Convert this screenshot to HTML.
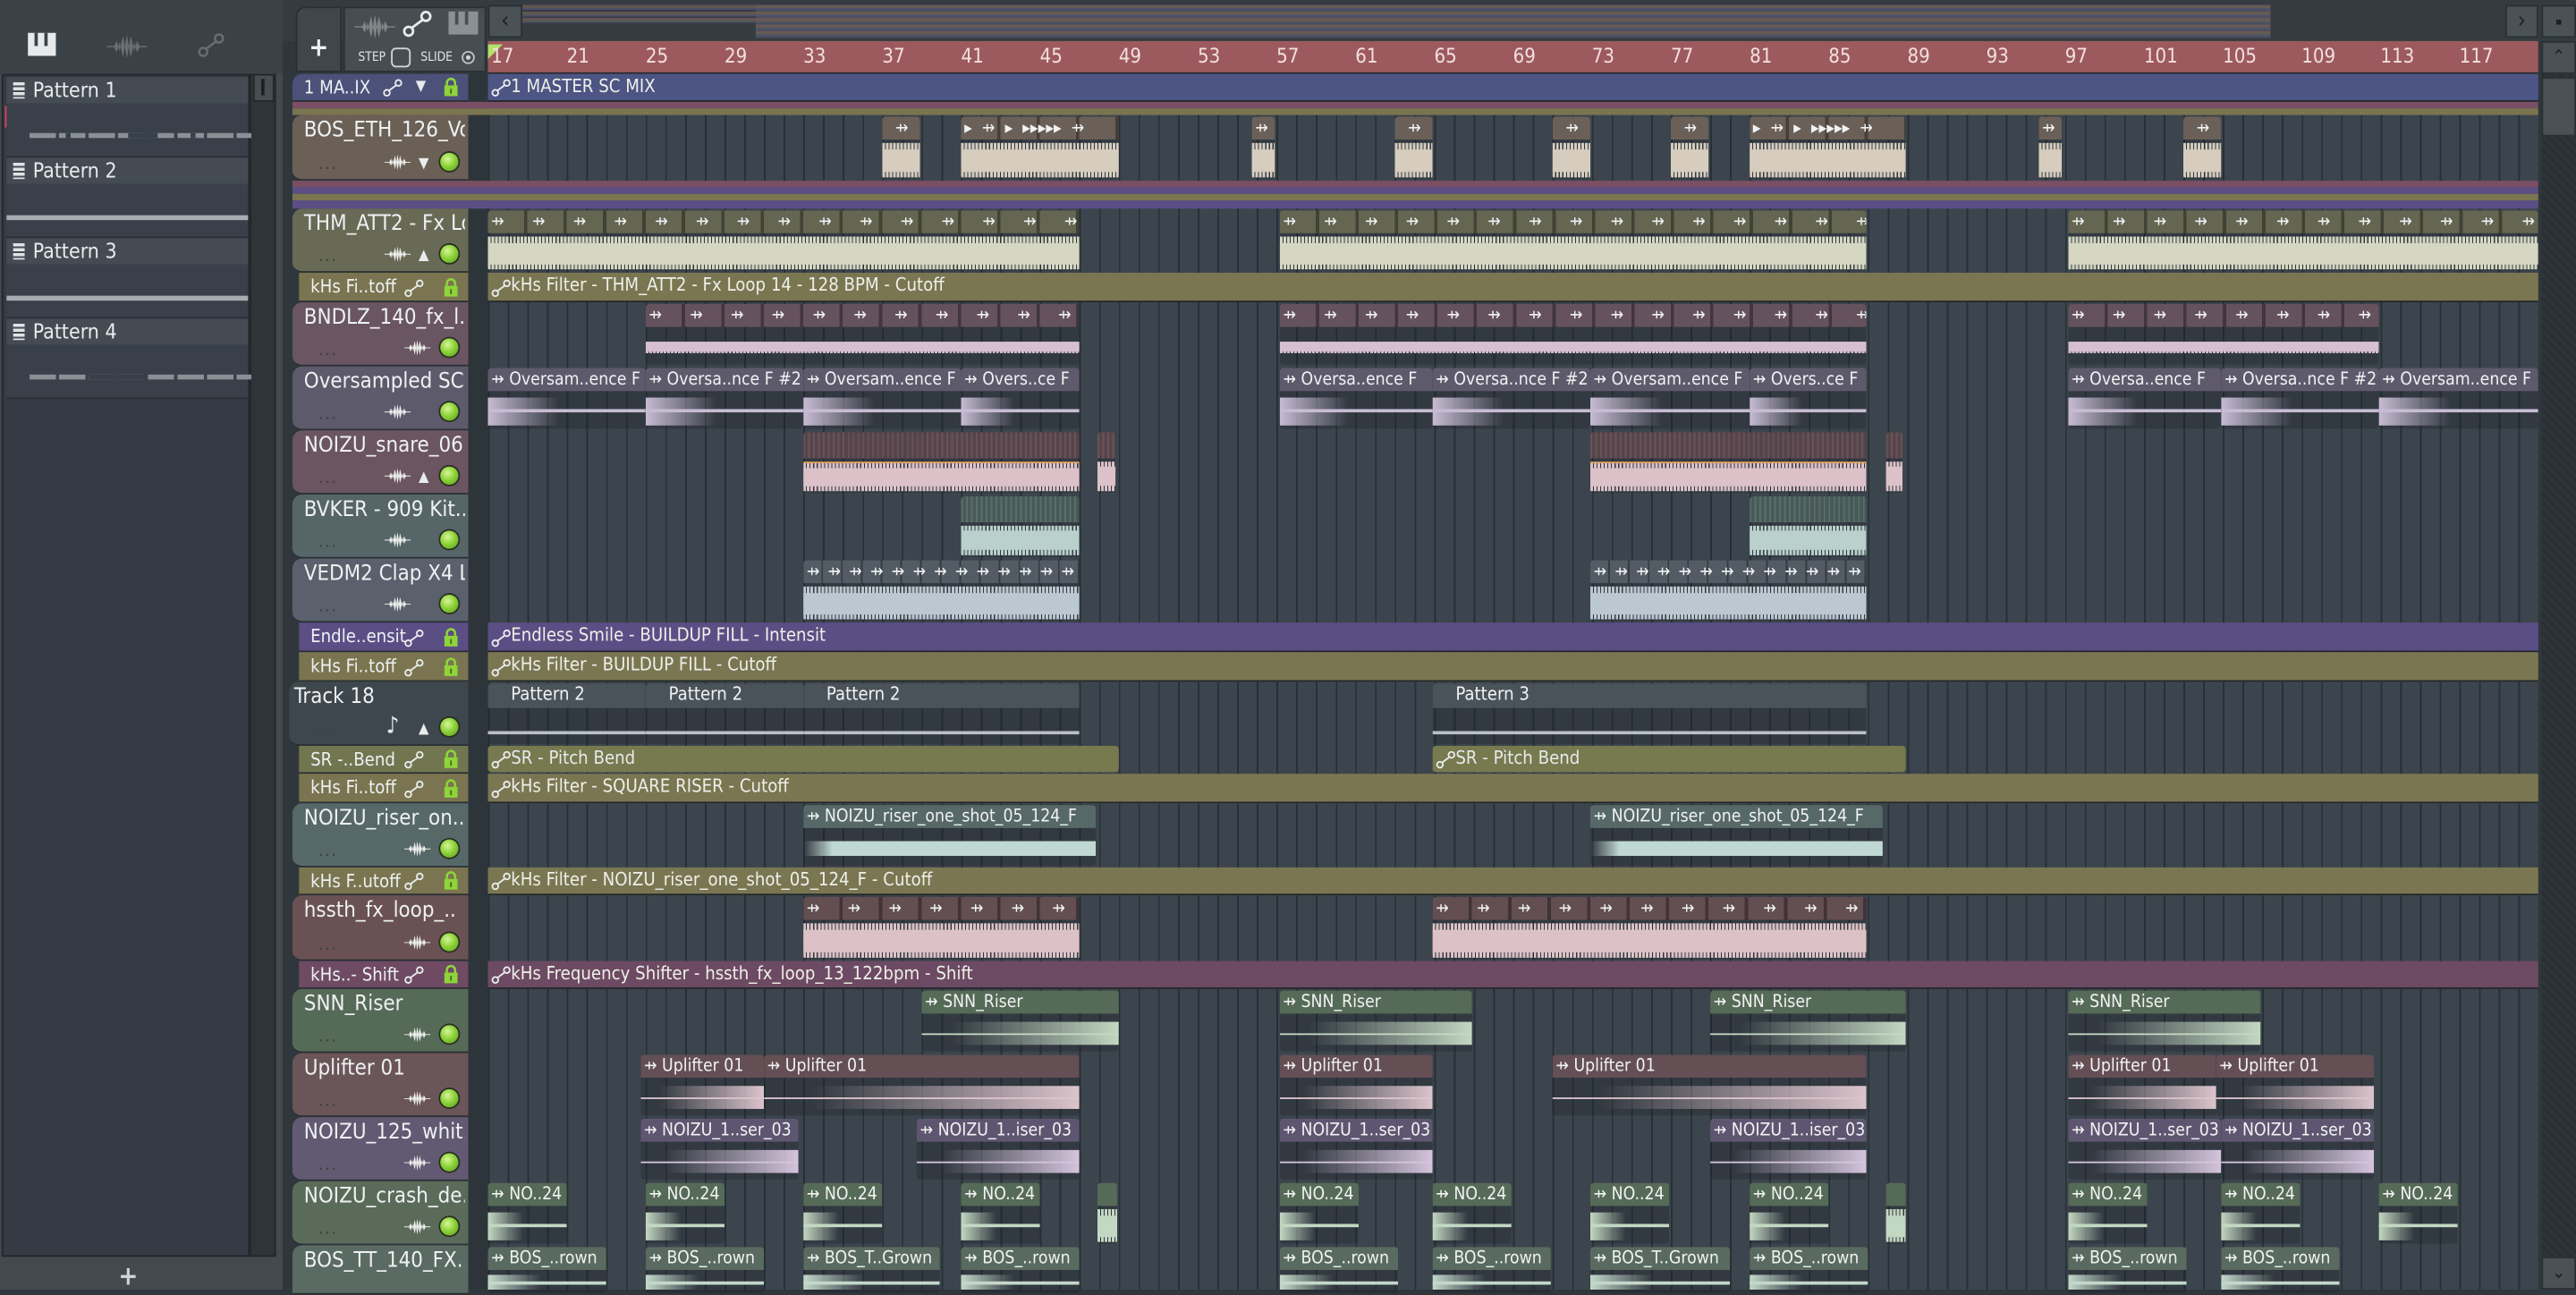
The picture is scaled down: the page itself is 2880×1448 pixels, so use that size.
<!DOCTYPE html>
<html><head><meta charset="utf-8">
<style>
*{box-sizing:border-box;margin:0;padding:0}
html,body{width:2880px;height:1442px;overflow:hidden;background:#30373c}
#s{position:absolute;left:0;top:0;width:1568px;height:785px;transform:scale(1.83674,1.83694);transform-origin:0 0;font-family:"DejaVu Sans Condensed","Liberation Sans Narrow","Liberation Sans",sans-serif;color:#e6eaec;background:#30373c}
.a{position:absolute}
.grid{position:absolute;left:297px;top:45px;width:1248px;height:740px;background:#3c454d;background-image:repeating-linear-gradient(90deg,#283036 0 1px,transparent 1px 12px)}
.row{position:absolute;left:0;width:1545px}
.c{position:absolute;top:1px;bottom:1px;background:rgba(25,30,35,.28);border-radius:2px;overflow:hidden}
.ch{height:14px;line-height:14px;font-size:10.5px;padding-left:2px;white-space:nowrap;overflow:hidden;background:var(--hc);color:#f0f2f3;border-radius:2px 2px 0 0}
.seg{background-image:repeating-linear-gradient(90deg,transparent 0 22px,rgba(0,0,0,.35) 22px 24px)}
.cw{position:absolute;left:0;right:0;top:16px;bottom:1px;background:repeating-linear-gradient(90deg,var(--wc) 0 1.6px,rgba(0,0,0,0) 1.6px 2.2px) 0 50%/100% 100% no-repeat,linear-gradient(var(--wc),var(--wc)) 0 50%/100% 65% no-repeat}
.cw.tl{background:linear-gradient(var(--wc),var(--wc)) 0 50%/100% 2px no-repeat,linear-gradient(90deg,var(--wc),rgba(0,0,0,0) 45%) 0 50%/100% 85% no-repeat}
.cw.up{background:linear-gradient(90deg,rgba(0,0,0,0) 15%,var(--wc)) 0 50%/100% 70% no-repeat,linear-gradient(var(--wc),var(--wc)) 0 50%/100% 1px no-repeat}
.cw.ov{background:linear-gradient(var(--wc),var(--wc)) 0 50%/100% 3px no-repeat}
.au{position:absolute;left:297px;width:1248px;top:0;height:100%;font-size:11px;line-height:16px;padding-left:14px;white-space:nowrap;color:#eef0e8;border-bottom:1px solid #22282c}
.hd{position:absolute;left:178px;width:107px;border-radius:6px 0 0 6px;overflow:hidden;border-bottom:1px solid #2a3035}
.hn{position:absolute;left:7px;top:2px;width:98px;overflow:hidden;font-size:13px;white-space:nowrap;color:#eef1f2}
.hs{position:absolute;left:7px;top:0;font-size:11px;line-height:17px;white-space:nowrap;color:#eef1f2}
.dots{position:absolute;left:16px;bottom:3px;font-size:10px;color:#3a3f3a;letter-spacing:1px}
.led{position:absolute;right:6px;bottom:5px;width:11px;height:11px;border-radius:50%;background:radial-gradient(circle at 40% 35%,#d6f59a,#8ed43a 45%,#5a9a20);box-shadow:0 0 0 1px #2a3020}
.tri{position:absolute;right:24px;bottom:4px;font-size:9px;color:#e8ecec}
.wv{position:absolute;right:34px;bottom:4px;width:17px;height:13px}
.lock{position:absolute;right:6px;top:3px;width:9px;height:12px}
.cv{position:absolute;width:12px;height:11px}
.pt{position:absolute;left:4px;width:147px}
.ph{height:16px;background:#444b52;font-size:12.5px;line-height:16px;padding-left:16px;position:relative;color:#e8ecee}
.ph:before{content:"";position:absolute;left:4px;top:3px;width:7px;height:10px;background:repeating-linear-gradient(#e0e4e6 0 2px,#444b52 2px 3px)}
.pb{height:33px;background:#39404a;position:relative;border-bottom:1px solid #2a3036}
.rn{position:absolute;top:27px;font-size:12px;color:#f3dfdf}
</style></head><body><div id="s">

<svg width="0" height="0" style="position:absolute"><defs>
<symbol id="wave" viewBox="0 0 17 13"><path d="M0 6.5h3l1-2 1 4 1.5-6 1.5 9 1.5-9 1.5 6 1-4 1 2h3v.5h-3l-1 2-1-4-1.5 6-1.5-9-1.5 9-1.5-6-1 4-1-2h-3z" fill="#eef0ee"/></symbol>
<symbol id="crv" viewBox="0 0 12 11"><circle cx="2.5" cy="8.5" r="1.8" fill="none" stroke="#e8ecec" stroke-width="1"/><circle cx="9.5" cy="2.5" r="1.8" fill="none" stroke="#e8ecec" stroke-width="1"/><path d="M4 7L8 4" stroke="#e8ecec" stroke-width="1"/></symbol>
<symbol id="lk" viewBox="0 0 9 12"><path d="M2 5V3.5a2.5 2.5 0 0 1 5 0V5" fill="none" stroke="#8ed43a" stroke-width="1.4"/><rect x="0.5" y="5" width="8" height="6.5" fill="#8ed43a"/><rect x="4" y="7" width="1" height="3" fill="#4a6a20"/></symbol>
</defs></svg>

<!-- left panel -->
<div class="a" style="left:0;top:0;width:172px;height:785px;background:#434a4e"></div>
<div class="a" style="left:0;top:0;width:172px;height:45px;background:#3b4247"></div>
<div class="a" style="left:17px;top:20px;width:17px;height:14px;background:#e6eaec"></div>
<div class="a" style="left:21px;top:20px;width:2px;height:8px;background:#3b4247"></div>
<div class="a" style="left:27px;top:20px;width:2px;height:8px;background:#3b4247"></div>
<svg class="a" style="left:62px;top:18px" width="32" height="20" viewBox="0 0 17 13"><use href="#wave" opacity=".25"/></svg>
<svg class="a" style="left:120px;top:20px;opacity:.25" width="17" height="15" viewBox="0 0 12 11"><use href="#crv"/></svg>
<div class="a" style="left:1px;top:45px;width:151px;height:720px;background:#353b45;border:1px solid #22272b"></div>
<div class="a" style="left:152px;top:45px;width:16px;height:720px;background:#2f3438;border:1px solid #22272b"></div>
<div class="a" style="left:154px;top:45px;width:13px;height:17px;background:#474e52;border:1px solid #22272b"></div>
<div class="a" style="left:159px;top:48px;width:2px;height:10px;background:#1c2024"></div>
<div class="a" style="left:0;top:766px;width:172px;height:19px;background:#434a4e"></div>
<div class="a" style="left:72px;top:767px;font-size:16px;font-weight:bold;color:#d0d4d6">+</div>
<div class="a" style="left:3px;top:64px;width:0;height:0;border-left:9px solid #d8405a;border-top:7px solid transparent;border-bottom:7px solid transparent"></div>

<div class="pt" style="top:47px"><div class="ph">Pattern 1</div><div class="pb"><div class="a" style="left:14px;top:18px;width:135px;height:3px;background:repeating-linear-gradient(90deg,#8a9196 0 16px,transparent 16px 18px)"></div><div class="a" style="left:36px;top:18px;width:3px;height:3px;background:#39404a"></div><div class="a" style="left:74px;top:18px;width:18px;height:3px;background:#39404a"></div><div class="a" style="left:112px;top:18px;width:3px;height:3px;background:#39404a"></div></div></div>
<div class="pt" style="top:96px"><div class="ph">Pattern 2</div><div class="pb"><div class="a" style="left:0;top:19px;width:147px;height:3px;background:#a6adb2"></div></div></div>
<div class="pt" style="top:145px"><div class="ph">Pattern 3</div><div class="pb"><div class="a" style="left:0;top:19px;width:147px;height:3px;background:#a6adb2"></div></div></div>
<div class="pt" style="top:194px"><div class="ph">Pattern 4</div><div class="pb"><div class="a" style="left:14px;top:18px;width:135px;height:3px;background:repeating-linear-gradient(90deg,#8a9196 0 16px,transparent 16px 18px)"></div><div class="a" style="left:50px;top:18px;width:36px;height:3px;background:#39404a"></div></div></div>

<!-- top toolbar -->
<div class="a" style="left:172px;top:0;width:1396px;height:25px;background:#353c41"></div>
<div class="a" style="left:180px;top:4px;width:28px;height:40px;background:#3f474b;border-radius:6px 0 0 0;border:1px solid #2a3034"></div>
<div class="a" style="left:188px;top:19px;font-size:16px;font-weight:bold;color:#f0f2f3">+</div>
<div class="a" style="left:209px;top:4px;width:87px;height:40px;background:#474e52;border:1px solid #2a3034"></div>
<svg class="a" style="left:214px;top:6px;opacity:.35" width="30" height="20" viewBox="0 0 17 13"><use href="#wave"/></svg>
<svg class="a" style="left:245px;top:6px" width="18" height="17" viewBox="0 0 12 11"><use href="#crv"/></svg>
<div class="a" style="left:273px;top:7px;width:18px;height:14px;background:#8a9196"></div>
<div class="a" style="left:277px;top:7px;width:2px;height:8px;background:#474e52"></div>
<div class="a" style="left:283px;top:7px;width:2px;height:8px;background:#474e52"></div>
<div class="a" style="left:218px;top:30px;font-size:7.5px;color:#e0e4e6">STEP</div>
<div class="a" style="left:238px;top:29px;width:12px;height:12px;border:1px solid #d0d4d6;border-radius:3px"></div>
<div class="a" style="left:256px;top:30px;font-size:7.5px;color:#e0e4e6">SLIDE</div>
<div class="a" style="left:281px;top:31px;width:8px;height:8px;border:1px solid #c0c4c6;border-radius:50%;background:radial-gradient(#d0d4d6 30%,transparent 35%)"></div>
<div class="a" style="left:297px;top:3px;width:21px;height:20px;background:#4a5256;border:1px solid #2a3034;font-size:14px;color:#1c2024;text-align:center;line-height:18px">&lsaquo;</div>
<div class="a" style="left:460px;top:3px;width:922px;height:20px;background:#4e575c;background-image:repeating-linear-gradient(#7a5a6a 0 1px,#6a6a4a 1px 2px,#5a5480 2px 3px,transparent 3px 4px);opacity:.8"></div>
<div class="a" style="left:318px;top:3px;width:142px;height:11px;background-image:repeating-linear-gradient(#7a5a6a 0 1px,#6a6a4a 1px 2px,#5a5480 2px 3px,transparent 3px 4px);opacity:.7"></div>
<div class="a" style="left:1525px;top:3px;width:20px;height:20px;background:#4a5256;border:1px solid #2a3034;font-size:14px;color:#1c2024;text-align:center;line-height:18px">&rsaquo;</div>
<div class="a" style="left:1547px;top:3px;width:21px;height:20px;background:#4a5256;border:1px solid #2a3034"></div>
<div class="a" style="left:1556px;top:12px;width:3px;height:3px;background:#1c2024"></div>

<!-- ruler -->
<div class="a" style="left:297px;top:25px;width:1248px;height:20px;background:#9d5a5e;border-bottom:1px solid #2a2a2e"></div>
<div class="a" style="left:297px;top:27px;width:0;height:0;border-top:9px solid #b6e06a;border-right:9px solid transparent"></div>
<div class="rn" style="left:299px">17</div><div class="rn" style="left:345px">21</div><div class="rn" style="left:393px">25</div><div class="rn" style="left:441px">29</div><div class="rn" style="left:489px">33</div><div class="rn" style="left:537px">37</div><div class="rn" style="left:585px">41</div><div class="rn" style="left:633px">45</div><div class="rn" style="left:681px">49</div><div class="rn" style="left:729px">53</div><div class="rn" style="left:777px">57</div><div class="rn" style="left:825px">61</div><div class="rn" style="left:873px">65</div><div class="rn" style="left:921px">69</div><div class="rn" style="left:969px">73</div><div class="rn" style="left:1017px">77</div><div class="rn" style="left:1065px">81</div><div class="rn" style="left:1113px">85</div><div class="rn" style="left:1161px">89</div><div class="rn" style="left:1209px">93</div><div class="rn" style="left:1257px">97</div><div class="rn" style="left:1305px">101</div><div class="rn" style="left:1353px">105</div><div class="rn" style="left:1401px">109</div><div class="rn" style="left:1449px">113</div><div class="rn" style="left:1497px">117</div>

<!-- right scrollbar -->
<div class="a" style="left:1547px;top:25px;width:21px;height:760px;background:#2c3236;background-image:repeating-linear-gradient(45deg,#2e3438 0 2px,#292f33 2px 4px)"></div>
<div class="a" style="left:1547px;top:25px;width:21px;height:20px;background:#4a5256;border:1px solid #2a3034;font-size:11px;text-align:center;line-height:18px;color:#1c2024">&#8963;</div>
<div class="a" style="left:1547px;top:47px;width:21px;height:36px;background:#4a5256;border:1px solid #2a3034"></div>
<div class="a" style="left:1547px;top:765px;width:21px;height:20px;background:#4a5256;border:1px solid #2a3034;font-size:11px;text-align:center;line-height:18px;color:#1c2024">&#8964;</div>

<div class="a" style="left:285px;top:45px;width:12px;height:740px;background:#2e353a"></div>
<div class="grid"></div>

<!-- 1 MASTER -->
<div class="row" style="top:45px;height:17px">
<div class="hd" style="height:17px;background:#4c5179;border-radius:6px 0 0 0"><div class="hs">1 MA..IX</div><svg class="cv" style="left:55px;top:3px"><use href="#crv"/></svg><div class="a" style="left:75px;top:3px;font-size:9px">&#9660;</div><svg class="lock" style="top:2px"><use href="#lk"/></svg></div>
<div class="au" style="background:#4c5584">1 MASTER SC MIX</div>
</div>
<div class="a" style="left:178px;top:62px;width:1367px;height:4px;background:#7a4e63"></div>
<div class="a" style="left:178px;top:66px;width:1367px;height:4px;background:#7a7550"></div>

<!-- BOS_ETH -->
<div class="row" style="top:70px;height:40px;--hc:#6a6058;--wc:#d6cdbf">
<div class="hd" style="height:40px;background:#6b6056"><div class="hn">BOS_ETH_126_Vo..</div><div class="dots">...</div><svg class="wv"><use href="#wave"/></svg><div class="tri">&#9660;</div><div class="led"></div></div>
<div class="c" style="left:537px;width:23px"><div class="ch">&nbsp;&nbsp;&#8696;</div><div class="cw"></div></div>
<div class="c" style="left:585px;width:96px"><div class="ch seg" style="word-spacing:3px">&#9656; &#8696; &#9656; &#9656;&#9656;&#9656;&#9656;&#9656; &#8696;</div><div class="cw"></div></div>
<div class="c" style="left:762px;width:14px"><div class="ch">&#8696;</div><div class="cw"></div></div>
<div class="c" style="left:849px;width:23px"><div class="ch">&nbsp;&nbsp;&#8696;</div><div class="cw"></div></div>
<div class="c" style="left:945px;width:23px"><div class="ch">&nbsp;&nbsp;&#8696;</div><div class="cw"></div></div>
<div class="c" style="left:1017px;width:23px"><div class="ch">&nbsp;&nbsp;&#8696;</div><div class="cw"></div></div>
<div class="c" style="left:1065px;width:95px"><div class="ch seg" style="word-spacing:3px">&#9656; &#8696; &#9656; &#9656;&#9656;&#9656;&#9656;&#9656; &#8696;</div><div class="cw"></div></div>
<div class="c" style="left:1241px;width:14px"><div class="ch">&#8696;</div><div class="cw"></div></div>
<div class="c" style="left:1329px;width:23px"><div class="ch">&nbsp;&nbsp;&#8696;</div><div class="cw"></div></div>
</div>
<div class="a" style="left:178px;top:110px;width:1367px;height:4px;background:#7a4e63"></div>
<div class="a" style="left:178px;top:114px;width:1367px;height:4px;background:#5b4e85"></div>
<div class="a" style="left:178px;top:118px;width:1367px;height:4px;background:#7a7550"></div>
<div class="a" style="left:178px;top:122px;width:1367px;height:5px;background:#5b4e85"></div>

<!-- THM -->
<div class="row" style="top:127px;height:39px;--hc:#646652;--wc:#d5d7c2">
<div class="hd" style="height:39px;background:#696a56"><div class="hn">THM_ATT2 - Fx Lo..</div><div class="dots">...</div><svg class="wv"><use href="#wave"/></svg><div class="tri">&#9650;</div><div class="led"></div></div>
<div class="c" style="left:297px;width:360px"><div class="ch seg" style="word-spacing:14px">&#8696; &#8696; &#8696; &#8696; &#8696; &#8696; &#8696; &#8696; &#8696; &#8696; &#8696; &#8696; &#8696; &#8696; &#8696;</div><div class="cw"></div></div>
<div class="c" style="left:779px;width:357px"><div class="ch seg" style="word-spacing:14px">&#8696; &#8696; &#8696; &#8696; &#8696; &#8696; &#8696; &#8696; &#8696; &#8696; &#8696; &#8696; &#8696; &#8696; &#8696;</div><div class="cw"></div></div>
<div class="c" style="left:1259px;width:286px"><div class="ch seg" style="word-spacing:14px">&#8696; &#8696; &#8696; &#8696; &#8696; &#8696; &#8696; &#8696; &#8696; &#8696; &#8696; &#8696;</div><div class="cw"></div></div>
</div>

<div class="row" style="top:166px;height:18px">
<div class="hd" style="height:18px;background:#7a7550;border-radius:0;left:182px;width:103px"><div class="hs">kHs Fi..toff</div><svg class="cv" style="left:64px;top:4px"><use href="#crv"/></svg><svg class="lock"><use href="#lk"/></svg></div>
<div class="au" style="background:#7b7652">kHs Filter - THM_ATT2 - Fx Loop 14 - 128 BPM - Cutoff</div>
</div>

<!-- BNDLZ -->
<div class="row" style="top:184px;height:39px;--hc:#66525e;--wc:#d6bfd0">
<div class="hd" style="height:39px;background:#6a5562"><div class="hn">BNDLZ_140_fx_l..</div><div class="dots">...</div><svg class="wv" style="right:22px"><use href="#wave"/></svg><div class="led"></div></div>
<div class="c" style="left:393px;width:264px"><div class="ch seg" style="word-spacing:14px">&#8696; &#8696; &#8696; &#8696; &#8696; &#8696; &#8696; &#8696; &#8696; &#8696; &#8696;</div><div class="cw" style="background-size:100% 35%,100% 30%"></div></div>
<div class="c" style="left:779px;width:357px"><div class="ch seg" style="word-spacing:14px">&#8696; &#8696; &#8696; &#8696; &#8696; &#8696; &#8696; &#8696; &#8696; &#8696; &#8696; &#8696; &#8696; &#8696; &#8696;</div><div class="cw" style="background-size:100% 35%,100% 30%"></div></div>
<div class="c" style="left:1259px;width:189px"><div class="ch seg" style="word-spacing:14px">&#8696; &#8696; &#8696; &#8696; &#8696; &#8696; &#8696; &#8696;</div><div class="cw" style="background-size:100% 35%,100% 30%"></div></div>
</div>

<!-- Oversampled -->
<div class="row" style="top:223px;height:39px;--hc:#5e5a6c;--wc:#c7bcd3">
<div class="hd" style="height:39px;background:#5d5a6c"><div class="hn">Oversampled SC..</div><div class="dots">...</div><svg class="wv"><use href="#wave"/></svg><div class="led"></div></div>
<div class="c" style="left:297px;width:96px"><div class="ch">&#8696; Oversam..ence F</div><div class="cw tl"></div></div>
<div class="c" style="left:393px;width:96px"><div class="ch">&#8696; Oversa..nce F #2</div><div class="cw tl"></div></div>
<div class="c" style="left:489px;width:96px"><div class="ch">&#8696; Oversam..ence F</div><div class="cw tl"></div></div>
<div class="c" style="left:585px;width:72px"><div class="ch">&#8696; Overs..ce F</div><div class="cw tl"></div></div>
<div class="c" style="left:779px;width:93px"><div class="ch">&#8696; Oversa..ence F</div><div class="cw tl"></div></div>
<div class="c" style="left:872px;width:96px"><div class="ch">&#8696; Oversa..nce F #2</div><div class="cw tl"></div></div>
<div class="c" style="left:968px;width:97px"><div class="ch">&#8696; Oversam..ence F</div><div class="cw tl"></div></div>
<div class="c" style="left:1065px;width:71px"><div class="ch">&#8696; Overs..ce F</div><div class="cw tl"></div></div>
<div class="c" style="left:1259px;width:93px"><div class="ch">&#8696; Oversa..ence F</div><div class="cw tl"></div></div>
<div class="c" style="left:1352px;width:96px"><div class="ch">&#8696; Oversa..nce F #2</div><div class="cw tl"></div></div>
<div class="c" style="left:1448px;width:97px"><div class="ch">&#8696; Oversam..ence F</div><div class="cw tl"></div></div>
</div>

<!-- snare -->
<div class="row" style="top:262px;height:39px;--hc:#5a4a50;--wc:#dcc1c9">
<div class="hd" style="height:39px;background:#6b5560"><div class="hn">NOIZU_snare_06</div><div class="dots">...</div><svg class="wv"><use href="#wave"/></svg><div class="tri">&#9650;</div><div class="led"></div></div>
<div class="c" style="left:489px;width:168px"><div class="ch" style="height:16px;background:repeating-linear-gradient(90deg,#6a5258 0 1px,#55454b 1px 3px)"></div><div class="cw" style="top:18px;border-top:1px solid #e0a060"></div></div>
<div class="c" style="left:668px;width:11px"><div class="ch" style="height:16px;background:repeating-linear-gradient(90deg,#6a5258 0 1px,#55454b 1px 3px)"></div><div class="cw" style="top:18px"></div></div>
<div class="c" style="left:968px;width:168px"><div class="ch" style="height:16px;background:repeating-linear-gradient(90deg,#6a5258 0 1px,#55454b 1px 3px)"></div><div class="cw" style="top:18px;border-top:1px solid #e0a060"></div></div>
<div class="c" style="left:1148px;width:10px"><div class="ch" style="height:16px;background:repeating-linear-gradient(90deg,#6a5258 0 1px,#55454b 1px 3px)"></div><div class="cw" style="top:18px"></div></div>
</div>

<!-- BVKER -->
<div class="row" style="top:301px;height:39px;--hc:#4a5e5a;--wc:#b9d0cc">
<div class="hd" style="height:39px;background:#566668"><div class="hn">BVKER - 909 Kit..</div><div class="dots">...</div><svg class="wv"><use href="#wave"/></svg><div class="led"></div></div>
<div class="c" style="left:585px;width:72px"><div class="ch" style="height:16px;background:repeating-linear-gradient(90deg,#5a6e6a 0 1px,#485a56 1px 3px)"></div><div class="cw" style="top:18px"></div></div>
<div class="c" style="left:1065px;width:71px"><div class="ch" style="height:16px;background:repeating-linear-gradient(90deg,#5a6e6a 0 1px,#485a56 1px 3px)"></div><div class="cw" style="top:18px"></div></div>
</div>

<!-- VEDM2 -->
<div class="row" style="top:340px;height:39px;--hc:#535b64;--wc:#bcc8d0">
<div class="hd" style="height:39px;background:#5b616c"><div class="hn">VEDM2 Clap X4 L..</div><div class="dots">...</div><svg class="wv"><use href="#wave"/></svg><div class="led"></div></div>
<div class="c" style="left:489px;width:168px"><div class="ch" style="word-spacing:2px;background-image:repeating-linear-gradient(90deg,transparent 0 11px,rgba(0,0,0,.35) 11px 12px)">&#8696; &#8696; &#8696; &#8696; &#8696; &#8696; &#8696; &#8696; &#8696; &#8696; &#8696; &#8696; &#8696; &#8696;</div><div class="cw"></div></div>
<div class="c" style="left:968px;width:168px"><div class="ch" style="word-spacing:2px;background-image:repeating-linear-gradient(90deg,transparent 0 11px,rgba(0,0,0,.35) 11px 12px)">&#8696; &#8696; &#8696; &#8696; &#8696; &#8696; &#8696; &#8696; &#8696; &#8696; &#8696; &#8696; &#8696; &#8696;</div><div class="cw"></div></div>
</div>

<div class="row" style="top:379px;height:18px">
<div class="hd" style="height:18px;background:#5b4e85;border-radius:0;left:182px;width:103px"><div class="hs">Endle..ensit</div><svg class="cv" style="left:64px;top:4px"><use href="#crv"/></svg><svg class="lock"><use href="#lk"/></svg></div>
<div class="au" style="background:#5b4e85">Endless Smile - BUILDUP FILL - Intensit</div>
</div>
<div class="row" style="top:397px;height:18px">
<div class="hd" style="height:18px;background:#7a7550;border-radius:0;left:182px;width:103px"><div class="hs">kHs Fi..toff</div><svg class="cv" style="left:64px;top:4px"><use href="#crv"/></svg><svg class="lock"><use href="#lk"/></svg></div>
<div class="au" style="background:#7b7652">kHs Filter - BUILDUP FILL - Cutoff</div>
</div>

<!-- Track 18 -->
<div class="row" style="top:415px;height:39px;--hc:#4b535a">
<div class="hd" style="height:39px;background:#3f474e;left:176px;width:109px"><div class="hn" style="left:3px">Track 18</div><div class="dots">...</div><div class="a" style="right:42px;bottom:3px;font-size:14px">&#9834;</div><div class="tri">&#9650;</div><div class="led"></div></div>
<div class="c" style="left:297px;width:96px"><div class="ch" style="padding-left:14px;height:15px;font-size:11px">Pattern 2</div><div class="a" style="left:0;right:0;top:29px;height:2px;background:#b9c0c4"></div></div>
<div class="c" style="left:393px;width:96px"><div class="ch" style="padding-left:14px;height:15px;font-size:11px">Pattern 2</div><div class="a" style="left:0;right:0;top:29px;height:2px;background:#b9c0c4"></div></div>
<div class="c" style="left:489px;width:168px"><div class="ch" style="padding-left:14px;height:15px;font-size:11px">Pattern 2</div><div class="a" style="left:0;right:0;top:29px;height:2px;background:#b9c0c4"></div></div>
<div class="c" style="left:872px;width:264px"><div class="ch" style="padding-left:14px;height:15px;font-size:11px">Pattern 3</div><div class="a" style="left:0;right:0;top:29px;height:2px;background:#b9c0c4"></div></div>
</div>

<!-- SR -->
<div class="row" style="top:454px;height:17px">
<div class="hd" style="height:17px;background:#727650;border-radius:0;left:182px;width:103px"><div class="hs">SR -..Bend</div><svg class="cv" style="left:64px;top:3px"><use href="#crv"/></svg><svg class="lock" style="top:2px"><use href="#lk"/></svg></div>
<div class="a" style="left:297px;width:384px;top:0;height:16px;background:#767a4e;font-size:11px;line-height:16px;padding-left:14px;border-radius:2px">SR - Pitch Bend</div>
<div class="a" style="left:872px;width:288px;top:0;height:16px;background:#767a4e;font-size:11px;line-height:16px;padding-left:14px;border-radius:2px">SR - Pitch Bend</div>
</div>
<div class="row" style="top:471px;height:18px">
<div class="hd" style="height:18px;background:#7a7550;border-radius:0;left:182px;width:103px"><div class="hs">kHs Fi..toff</div><svg class="cv" style="left:64px;top:4px"><use href="#crv"/></svg><svg class="lock"><use href="#lk"/></svg></div>
<div class="au" style="background:#7b7652">kHs Filter - SQUARE RISER - Cutoff</div>
</div>

<!-- NOIZU riser -->
<div class="row" style="top:489px;height:39px;--hc:#566867;--wc:#c0d8d2">
<div class="hd" style="height:39px;background:#576869"><div class="hn">NOIZU_riser_on..</div><div class="dots">...</div><svg class="wv" style="right:22px"><use href="#wave"/></svg><div class="led"></div></div>
<div class="c" style="left:489px;width:178px"><div class="ch">&#8696; NOIZU_riser_one_shot_05_124_F</div><div class="cw" style="background:linear-gradient(90deg,rgba(0,0,0,0),var(--wc) 10%) 0 55%/100% 45% no-repeat"></div></div>
<div class="c" style="left:968px;width:178px"><div class="ch">&#8696; NOIZU_riser_one_shot_05_124_F</div><div class="cw" style="background:linear-gradient(90deg,rgba(0,0,0,0),var(--wc) 10%) 0 55%/100% 45% no-repeat"></div></div>
</div>
<div class="row" style="top:528px;height:17px">
<div class="hd" style="height:17px;background:#7a7550;border-radius:0;left:182px;width:103px"><div class="hs">kHs F..utoff</div><svg class="cv" style="left:64px;top:3px"><use href="#crv"/></svg><svg class="lock" style="top:2px"><use href="#lk"/></svg></div>
<div class="au" style="background:#7b7652">kHs Filter - NOIZU_riser_one_shot_05_124_F - Cutoff</div>
</div>

<!-- hssth -->
<div class="row" style="top:545px;height:40px;--hc:#634e52;--wc:#dcc2c6">
<div class="hd" style="height:40px;background:#6a5254"><div class="hn">hssth_fx_loop_..</div><div class="dots">...</div><svg class="wv" style="right:22px"><use href="#wave"/></svg><div class="led"></div></div>
<div class="c" style="left:489px;width:168px"><div class="ch seg" style="word-spacing:14px">&#8696; &#8696; &#8696; &#8696; &#8696; &#8696; &#8696;</div><div class="cw"></div></div>
<div class="c" style="left:872px;width:264px"><div class="ch seg" style="word-spacing:14px">&#8696; &#8696; &#8696; &#8696; &#8696; &#8696; &#8696; &#8696; &#8696; &#8696; &#8696;</div><div class="cw"></div></div>
</div>
<div class="row" style="top:585px;height:17px">
<div class="hd" style="height:17px;background:#6e4b63;border-radius:0;left:182px;width:103px"><div class="hs">kHs..- Shift</div><svg class="cv" style="left:64px;top:3px"><use href="#crv"/></svg><svg class="lock" style="top:2px"><use href="#lk"/></svg></div>
<div class="au" style="background:#6d4a63">kHs Frequency Shifter - hssth_fx_loop_13_122bpm - Shift</div>
</div>

<!-- SNN -->
<div class="row" style="top:602px;height:39px;--hc:#566b57;--wc:#c3d8c2">
<div class="hd" style="height:39px;background:#566a58"><div class="hn">SNN_Riser</div><div class="dots">...</div><svg class="wv" style="right:22px"><use href="#wave"/></svg><div class="led"></div></div>
<div class="c" style="left:561px;width:120px"><div class="ch">&#8696; SNN_Riser</div><div class="cw up"></div></div>
<div class="c" style="left:779px;width:117px"><div class="ch">&#8696; SNN_Riser</div><div class="cw up"></div></div>
<div class="c" style="left:1041px;width:119px"><div class="ch">&#8696; SNN_Riser</div><div class="cw up"></div></div>
<div class="c" style="left:1259px;width:117px"><div class="ch">&#8696; SNN_Riser</div><div class="cw up"></div></div>
</div>

<!-- Uplifter -->
<div class="row" style="top:641px;height:39px;--hc:#644f55;--wc:#dcc4cc">
<div class="hd" style="height:39px;background:#6a5559"><div class="hn">Uplifter 01</div><div class="dots">...</div><svg class="wv" style="right:22px"><use href="#wave"/></svg><div class="led"></div></div>
<div class="c" style="left:390px;width:75px"><div class="ch">&#8696; Uplifter 01</div><div class="cw up"></div></div>
<div class="c" style="left:465px;width:192px"><div class="ch">&#8696; Uplifter 01</div><div class="cw up"></div></div>
<div class="c" style="left:779px;width:93px"><div class="ch">&#8696; Uplifter 01</div><div class="cw up"></div></div>
<div class="c" style="left:945px;width:191px"><div class="ch">&#8696; Uplifter 01</div><div class="cw up"></div></div>
<div class="c" style="left:1259px;width:90px"><div class="ch">&#8696; Uplifter 01</div><div class="cw up"></div></div>
<div class="c" style="left:1349px;width:96px"><div class="ch">&#8696; Uplifter 01</div><div class="cw up"></div></div>
</div>

<!-- NOIZU 125 -->
<div class="row" style="top:680px;height:39px;--hc:#5e5670;--wc:#d4c4dc">
<div class="hd" style="height:39px;background:#625a73"><div class="hn">NOIZU_125_whit..</div><div class="dots">...</div><svg class="wv" style="right:22px"><use href="#wave"/></svg><div class="led"></div></div>
<div class="c" style="left:390px;width:96px"><div class="ch">&#8696; NOIZU_1..ser_03</div><div class="cw up"></div></div>
<div class="c" style="left:558px;width:99px"><div class="ch">&#8696; NOIZU_1..iser_03</div><div class="cw up"></div></div>
<div class="c" style="left:779px;width:93px"><div class="ch">&#8696; NOIZU_1..ser_03</div><div class="cw up"></div></div>
<div class="c" style="left:1041px;width:95px"><div class="ch">&#8696; NOIZU_1..iser_03</div><div class="cw up"></div></div>
<div class="c" style="left:1259px;width:93px"><div class="ch">&#8696; NOIZU_1..ser_03</div><div class="cw up"></div></div>
<div class="c" style="left:1352px;width:93px"><div class="ch">&#8696; NOIZU_1..ser_03</div><div class="cw up"></div></div>
</div>

<!-- crash -->
<div class="row" style="top:719px;height:39px;--hc:#566b57;--wc:#c3d8c2">
<div class="hd" style="height:39px;background:#5a6b5a"><div class="hn">NOIZU_crash_de..</div><div class="dots">...</div><svg class="wv" style="right:22px"><use href="#wave"/></svg><div class="led"></div></div>
<div class="c" style="left:297px;width:48px"><div class="ch">&#8696; NO..24</div><div class="cw tl"></div></div>
<div class="c" style="left:393px;width:48px"><div class="ch">&#8696; NO..24</div><div class="cw tl"></div></div>
<div class="c" style="left:489px;width:48px"><div class="ch">&#8696; NO..24</div><div class="cw tl"></div></div>
<div class="c" style="left:585px;width:48px"><div class="ch">&#8696; NO..24</div><div class="cw tl"></div></div>
<div class="c" style="left:668px;width:12px"><div class="ch"></div><div class="cw"></div></div>
<div class="c" style="left:779px;width:48px"><div class="ch">&#8696; NO..24</div><div class="cw tl"></div></div>
<div class="c" style="left:872px;width:48px"><div class="ch">&#8696; NO..24</div><div class="cw tl"></div></div>
<div class="c" style="left:968px;width:48px"><div class="ch">&#8696; NO..24</div><div class="cw tl"></div></div>
<div class="c" style="left:1065px;width:48px"><div class="ch">&#8696; NO..24</div><div class="cw tl"></div></div>
<div class="c" style="left:1148px;width:12px"><div class="ch"></div><div class="cw"></div></div>
<div class="c" style="left:1259px;width:48px"><div class="ch">&#8696; NO..24</div><div class="cw tl"></div></div>
<div class="c" style="left:1352px;width:48px"><div class="ch">&#8696; NO..24</div><div class="cw tl"></div></div>
<div class="c" style="left:1448px;width:48px"><div class="ch">&#8696; NO..24</div><div class="cw tl"></div></div>
</div>

<!-- BOS_TT -->
<div class="row" style="top:758px;height:30px;--hc:#596b60;--wc:#c3d8ca">
<div class="hd" style="height:30px;background:#5a6b63;border-radius:6px 0 0 0"><div class="hn">BOS_TT_140_FX..</div></div>
<div class="c" style="left:297px;width:72px"><div class="ch">&#8696; BOS_..rown</div><div class="cw tl"></div></div>
<div class="c" style="left:393px;width:72px"><div class="ch">&#8696; BOS_..rown</div><div class="cw tl"></div></div>
<div class="c" style="left:489px;width:83px"><div class="ch">&#8696; BOS_T..Grown</div><div class="cw tl"></div></div>
<div class="c" style="left:585px;width:72px"><div class="ch">&#8696; BOS_..rown</div><div class="cw tl"></div></div>
<div class="c" style="left:779px;width:72px"><div class="ch">&#8696; BOS_..rown</div><div class="cw tl"></div></div>
<div class="c" style="left:872px;width:72px"><div class="ch">&#8696; BOS_..rown</div><div class="cw tl"></div></div>
<div class="c" style="left:968px;width:85px"><div class="ch">&#8696; BOS_T..Grown</div><div class="cw tl"></div></div>
<div class="c" style="left:1065px;width:72px"><div class="ch">&#8696; BOS_..rown</div><div class="cw tl"></div></div>
<div class="c" style="left:1259px;width:72px"><div class="ch">&#8696; BOS_..rown</div><div class="cw tl"></div></div>
<div class="c" style="left:1352px;width:72px"><div class="ch">&#8696; BOS_..rown</div><div class="cw tl"></div></div>
</div>

<svg class="cv a" style="left:299px;top:48px"><use href="#crv"/></svg>
<svg class="cv a" style="left:299px;top:170px"><use href="#crv"/></svg>
<svg class="cv a" style="left:299px;top:383px"><use href="#crv"/></svg>
<svg class="cv a" style="left:299px;top:401px"><use href="#crv"/></svg>
<svg class="cv a" style="left:299px;top:457px"><use href="#crv"/></svg>
<svg class="cv a" style="left:874px;top:457px"><use href="#crv"/></svg>
<svg class="cv a" style="left:299px;top:475px"><use href="#crv"/></svg>
<svg class="cv a" style="left:299px;top:531px"><use href="#crv"/></svg>
<svg class="cv a" style="left:299px;top:588px"><use href="#crv"/></svg>

</div></body></html>
